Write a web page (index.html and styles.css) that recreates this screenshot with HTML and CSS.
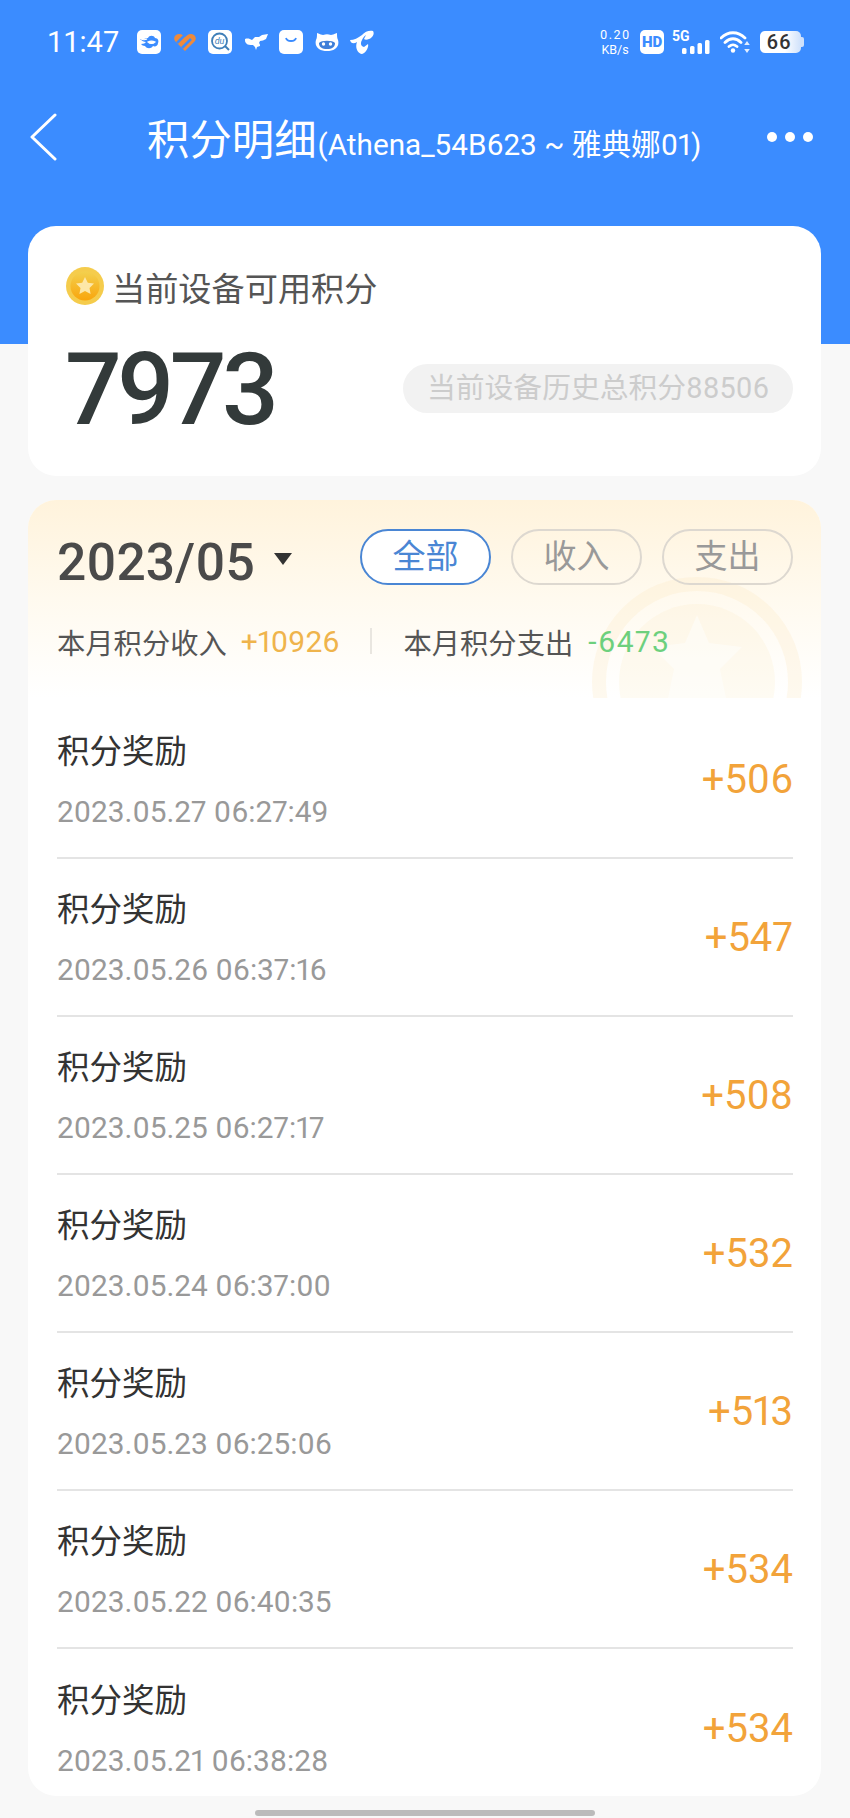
FILE: index.html
```html
<!DOCTYPE html>
<html lang="zh-CN">
<head>
  <meta charset="UTF-8" />
  <meta name="viewport" content="width=device-width, initial-scale=1.0" />
  <title>积分明细</title>
  <link rel="stylesheet" href="styles.css">
</head>
<body>

  <header class="top">
    <div class="status">
      <span class="time">11:47</span>
      <div class="app-icons">
        <svg class="app" viewBox="0 0 24 24"><rect width="24" height="24" rx="5" fill="#fff"/><path d="M11 8c1-3 6-3 7 0 3 0 4 3 3 5 0 3-3 4-5 3-2 3-6 3-8 0-2 0-3-1-4-2 3 0 4-1 5-2-2 0-4-1-6-3 3 0 5 0 8-1z" fill="#3b8cff"/><path d="M3 6c2 1 4 1 6 0M4 9c2 1 4 1 6 0M11 12c2-1 5-1 7 0-2 2-5 2-7 0z" fill="#fff" stroke="#fff" stroke-width="1.2"/></svg>
        <svg class="app" viewBox="0 0 24 24"><path d="M12 21 2 11c-2-3 0-7 4-7 3 0 5 2 6 3 1-1 3-3 6-3 4 0 6 4 4 7z" fill="#ee8a3c"/><path d="M4 13 13 4M9 18l9-9" stroke="#3b8cff" stroke-width="2.5"/></svg>
        <svg class="app" viewBox="0 0 24 24"><rect width="24" height="24" rx="5" fill="#fff"/><circle cx="11.5" cy="11" r="7.5" fill="none" stroke="#3f7fb8" stroke-width="1.8"/><path d="m17 16 4 4" stroke="#3f7fb8" stroke-width="2"/><text x="11.5" y="14" class="app-du">du</text></svg>
        <svg class="app" viewBox="0 0 24 24"><path d="M1 9c3-1 5 0 7 1l3-3h4l3-2 6-1-2 5c-2 1-4 2-6 2l-1 2c1 1 1 2 1 3l-3 1-1 3-1-3-2-2c-3 0-6 0-7-2-1-1-1-2-1-4z" fill="#fff"/></svg>
        <svg class="app" viewBox="0 0 24 24"><rect width="24" height="24" rx="5" fill="#fff"/><path d="M7 8c1 4 9 4 10 0" fill="none" stroke="#3b8cff" stroke-width="1.8"/></svg>
        <svg class="app" viewBox="0 0 24 24"><path d="M2 3c3 1 5 2 6 2 3-1 5-1 8 0 1 0 3-1 6-2 0 3 0 5 1 7 2 7-4 11-11 11S-1 17 1 10c1-2 1-4 1-7z" fill="#fff"/><path d="M4 13c2-3 14-3 16 0 0 4-3 6-8 6s-8-2-8-6z" fill="#3f7fd8"/><circle cx="8.500" cy="14" r="1.700" fill="#fff"/><circle cx="15.500" cy="14" r="1.700" fill="#fff"/></svg>
        <svg class="app" viewBox="0 0 24 24"><path d="M0 10c4 0 8-2 12-5 3-4 8-5 11-4 2 3-1 7-4 8-2 1-4 1-5 0l2-4c-2 1-3 3-4 5-2 3-1 7 2 7l4-3c1 3-2 9-6 10-5-1-7-7-5-12-3 2-6 2-7-2z" fill="#fff"/></svg>
      </div>
      <div class="sys-icons">
        <div class="speed">0.20<br>KB/s</div>
        <div class="hd">HD</div>
        <div class="signal">
          <span class="five-g">5G</span>
          <svg class="bars" viewBox="0 0 28 14"><rect x="0" y="8" width="4.5" height="6" rx="1.5"/><rect x="8" y="6" width="4.5" height="8" rx="1.5"/><rect x="15.5" y="3" width="4.5" height="11" rx="1.5"/><rect x="23" y="0" width="4.5" height="14" rx="1.5"/></svg>
        </div>
        <svg class="wifi" viewBox="0 0 30 22"><path d="M1 7c7-7 17-7 24 0M5 11.5c5-5 11-5 16 0M9 15.5c3-2.500 5-2.500 8 0" fill="none" stroke="#fff" stroke-width="2.800" stroke-linecap="round"/><circle cx="13" cy="19.500" r="2.200" fill="#fff"/><path d="m27 10 2.800 4h-5.600zM27 22l-2.800-4h5.600z" fill="#fff" opacity=".85"/></svg>
        <div class="battery"><span>66</span></div>
      </div>
    </div>
    <nav class="nav">
      <svg class="back" viewBox="0 0 28 48"><path d="M26 2 3 24l23 22" fill="none" stroke="#fff" stroke-width="3" stroke-linecap="round" stroke-linejoin="round"/></svg>
      <h1 class="nav-title">积分明细<small>(Athena_54B623 ~ 雅典娜01)</small></h1>
      <div class="dots"><i></i><i></i><i></i></div>
    </nav>
  </header>

  <main class="content">
    <section class="card points">
      <div class="points-label">
        <svg class="coin" viewBox="0 0 38 38">
          <defs><linearGradient id="coin-fill" x1="0" y1="0" x2="0" y2="1"><stop offset="0" stop-color="#f3d04e"/><stop offset="1" stop-color="#f9a50c"/></linearGradient></defs>
          <circle cx="19" cy="19" r="19" fill="#f5cc4c"/>
          <circle cx="19" cy="19" r="14.500" fill="url(#coin-fill)"/>
          <path d="m19 10 2.800 5.800 6.200.8-4.500 4.300 1.100 6.200-5.600-3-5.600 3 1.100-6.200-4.500-4.300 6.200-.8z" fill="#fde7a8"/>
        </svg>
        当前设备可用积分
      </div>
      <div class="points-main">
        <span class="points-value">7973</span>
        <span class="points-total">当前设备历史总积分88506</span>
      </div>
    </section>

    <section class="card records">
      <div class="records-head">
        <svg class="watermark" viewBox="0 0 210 121">
          <circle cx="105" cy="105" r="98" fill="none" stroke="#f9e4b4" stroke-width="14" opacity=".22"/>
          <circle cx="105" cy="105" r="78" fill="#f9e4b4" opacity=".16"/>
          <path d="m105 38 12 28 33 4-22 22 6 29H76l6-29-22-22 33-4z" fill="#fff" opacity=".45"/>
        </svg>
        <div class="filter-row">
          <div class="month">2023/05<span class="caret"></span></div>
          <div class="tabs">
            <span class="tab tab-active">全部</span>
            <span class="tab">收入</span>
            <span class="tab">支出</span>
          </div>
        </div>
        <div class="summary">
          <span>本月积分收入</span><span class="income">+10926</span>
          <i class="summary-line"></i>
          <span>本月积分支出</span><span class="expense">-6473</span>
        </div>
      </div>

      <ul class="record-list">
        <li class="record"><div><p class="record-name">积分奖励</p><p class="record-date">2023.05.27 06:27:49</p></div><span class="record-amount">+506</span></li>
        <li class="record"><div><p class="record-name">积分奖励</p><p class="record-date">2023.05.26 06:37:16</p></div><span class="record-amount">+547</span></li>
        <li class="record"><div><p class="record-name">积分奖励</p><p class="record-date">2023.05.25 06:27:17</p></div><span class="record-amount">+508</span></li>
        <li class="record"><div><p class="record-name">积分奖励</p><p class="record-date">2023.05.24 06:37:00</p></div><span class="record-amount">+532</span></li>
        <li class="record"><div><p class="record-name">积分奖励</p><p class="record-date">2023.05.23 06:25:06</p></div><span class="record-amount">+513</span></li>
        <li class="record"><div><p class="record-name">积分奖励</p><p class="record-date">2023.05.22 06:40:35</p></div><span class="record-amount">+534</span></li>
        <li class="record"><div><p class="record-name">积分奖励</p><p class="record-date">2023.05.21 06:38:28</p></div><span class="record-amount">+534</span></li>
      </ul>
    </section>
  </main>

  <div class="home-bar"></div>

</body>
</html>
```

FILE: styles.css
```css
* {
  box-sizing: border-box;
}

html, body {
  margin: 0;
  height: 1818px;
  overflow: hidden;
}

body {
  font-family: Roboto, "Noto Sans CJK SC", sans-serif;
  font-variant-numeric: proportional-nums;
  background-color: #f8f8f8;
  color: #333;
}

p, ul, h1 {
  margin: 0;
  padding: 0;
}

.top {
  height: 344px;
  background-color: #3b8cff;
  color: #fff;
  padding-top: 30px;
}

.status {
  display: flex;
  align-items: center;
  height: 24px;
  padding-left: 47px;
}

.time {
  width: 70px;
  font-size: 29px;
  font-variant-numeric: tabular-nums;
  line-height: 24px;
  white-space: nowrap;
}

.app-icons {
  display: flex;
  gap: 11.5px;
  margin-left: 20px;
}

.app {
  display: block;
  width: 24px;
  height: 24px;
}

.app-du {
  font-family: Roboto, sans-serif;
  font-size: 9px;
  font-style: italic;
  text-anchor: middle;
  fill: #3f7fb8;
}

.sys-icons {
  display: flex;
  align-items: center;
  margin-left: 226px;
}

.speed {
  width: 30px;
  font-size: 12.500px;
  line-height: 15px;
  text-align: center;
  white-space: nowrap;
}

.speed::first-line {
  letter-spacing: 1.500px;
}

.hd {
  width: 24px;
  height: 24px;
  margin-left: 10px;
  border-radius: 5px;
  background-color: #fff;
  color: #3b8cff;
  font-size: 15px;
  font-weight: 900;
  line-height: 24px;
  text-align: center;
}

.signal {
  position: relative;
  width: 38px;
  height: 24px;
  margin-left: 8px;
}

.five-g {
  position: absolute;
  left: 0;
  top: -1px;
  font-size: 14px;
  font-weight: 700;
  line-height: 14px;
}

.bars {
  position: absolute;
  right: 0;
  bottom: 0;
  width: 28px;
  height: 14px;
  fill: #fff;
}

.wifi {
  width: 30px;
  height: 22px;
  margin-left: 10px;
}

.battery {
  position: relative;
  width: 41px;
  height: 22px;
  margin-left: 10px;
  border-radius: 5px;
  background: linear-gradient(90deg, #fff 60%, #cfe1fb);
  color: #333;
  font-size: 20px;
  font-weight: 500;
  line-height: 22px;
  text-align: center;
  padding-right: 3px;
  letter-spacing: 1px;
}

.battery::after {
  content: "";
  position: absolute;
  right: -3px;
  top: 6px;
  width: 3px;
  height: 10px;
  border-radius: 0 2px 2px 0;
  background-color: #cfe1fb;
}

.nav {
  display: flex;
  align-items: center;
  height: 60px;
  margin-top: 53px;
  padding-left: 28px;
}

.back {
  width: 30px;
  height: 48px;
}

.nav-title {
  margin-top: 12px;
  margin-left: 89px;
  width: 620px;
  font-size: 42.400px;
  font-weight: 400;
  line-height: 60px;
  white-space: nowrap;
}

.nav-title small {
  margin-left: 1px;
  font-size: 29.700px;
}

.dots {
  display: flex;
  gap: 8px;
  margin-left: 0;
}

.dots i {
  width: 10px;
  height: 10px;
  border-radius: 50%;
  background-color: #fff;
}

.content {
  display: flex;
  flex-direction: column;
  gap: 24px;
  margin-top: -118px;
  padding: 0 29px 0 28px;
}

.card {
  border-radius: 28px;
  background-color: #fff;
}

.points {
  height: 250px;
  padding: 41px 28px 0 38px;
}

.points-label {
  display: flex;
  align-items: center;
  gap: 8px;
  height: 38px;
  font-size: 33.200px;
  color: #555;
  white-space: nowrap;
}

.coin {
  width: 38px;
  height: 38px;
}

.points-main {
  display: flex;
  align-items: center;
  justify-content: space-between;
  margin-top: 21px;
  height: 120px;
}

.points-value {
  margin-top: 8px;
  margin-left: -1px;
  font-size: 100px;
  font-weight: 500;
  font-variant-numeric: tabular-nums;
  line-height: 120px;
  letter-spacing: -4.500px;
  color: #333a3a;
}

.points-total {
  height: 49px;
  margin-top: 4px;
  padding: 0 24px;
  border-radius: 25px;
  background-color: #f2f2f2;
  color: #ccc;
  font-size: 28.800px;
  line-height: 49px;
  white-space: nowrap;
}

.records-head {
  position: relative;
  height: 198px;
  padding: 29px 28px 0 30px;
  border-radius: 28px 28px 0 0;
  background: linear-gradient(180deg, #fff3dc 0%, #fffaef 50%, #fffdf9 80%, #fff 100%);
}

.watermark {
  position: absolute;
  right: 19px;
  bottom: 0;
  width: 210px;
  height: 121px;
}

.filter-row {
  position: relative;
  display: flex;
  align-items: center;
  justify-content: space-between;
  height: 56px;
}

.month {
  display: flex;
  align-items: center;
  margin-top: 10px;
  margin-left: -1px;
  font-size: 51.500px;
  font-weight: 500;
  color: #4a4a4a;
}

.caret {
  width: 0;
  height: 0;
  margin-left: 19px;
  margin-bottom: 6px;
  border-left: 9px solid transparent;
  border-right: 9px solid transparent;
  border-top: 12px solid #333;
}

.tabs {
  display: flex;
  gap: 20px;
}

.tab {
  width: 131px;
  height: 56px;
  border: 2px solid #ddd8d0;
  border-radius: 28px;
  color: #999;
  font-size: 33px;
  line-height: 52px;
  text-align: center;
}

.tab-active {
  border-color: #4a86d4;
  background-color: #fff;
  color: #4a86d4;
}

.summary {
  position: relative;
  display: flex;
  align-items: center;
  height: 40px;
  margin-top: 36px;
  margin-left: -1px;
  font-size: 28.300px;
  color: #555;
  white-space: nowrap;
}

.income {
  margin-left: 14px;
  font-size: 30px;
  color: #efb44c;
}

.expense {
  margin-left: 15px;
  font-size: 30px;
  letter-spacing: 1.500px;
  color: #6dd07d;
}

.summary-line {
  width: 2px;
  height: 26px;
  margin: 0 31px;
  background-color: #e9e6e0;
}

.record-list {
  list-style: none;
  padding: 3px 28px 0 29px;
}

.record {
  display: flex;
  align-items: center;
  justify-content: space-between;
  height: 158px;
  border-bottom: 2px solid #e4e4e4;
}

.record:last-child {
  border-bottom: none;
  margin-bottom: -11px;
}

.record-name {
  font-size: 32.500px;
  line-height: 46px;
  color: #333;
}

.record-date {
  margin-top: 19px;
  font-size: 29.800px;
  line-height: 35px;
  color: #999;
}

.record-amount {
  font-size: 40px;
  color: #f2a33a;
}

.home-bar {
  width: 340px;
  height: 6px;
  margin: 14px auto 0;
  border-radius: 3px;
  background-color: #bbb;
}
```
